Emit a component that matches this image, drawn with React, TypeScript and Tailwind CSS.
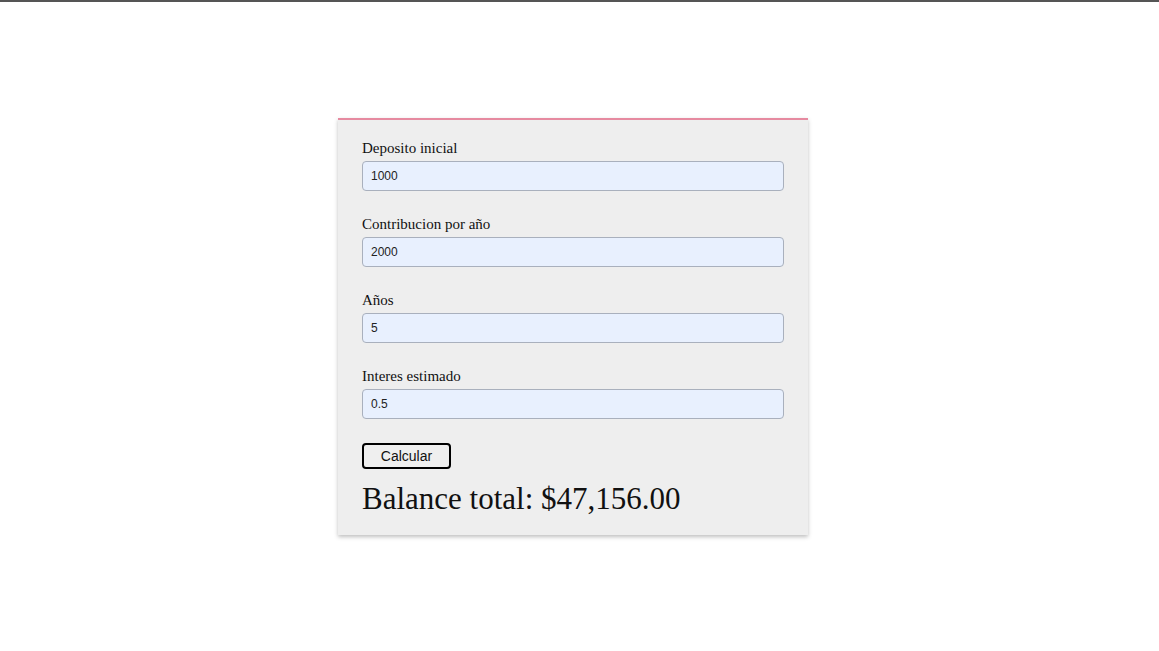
import React from "react";

const fields = [
  { label: "Deposito inicial", value: "1000" },
  { label: "Contribucion por año", value: "2000" },
  { label: "Años", value: "5" },
  { label: "Interes estimado", value: "0.5" },
];

export default function App() {
  return (
    <div className="min-h-[651px] bg-white border-t-2 border-[#555555]">
      <div className="flex justify-center pt-[116px] pr-[13px]">
        <div
          className="w-[470px] bg-[#eeeeee] border-t-2 border-[#e68aa0] shadow-[0_2px_4px_rgba(0,0,0,0.25)] px-6 pt-5 pb-5"
          style={{ fontFamily: '"Liberation Serif", serif' }}
        >
          <div className="flex flex-col gap-[25px]">
            {fields.map((f) => (
              <div key={f.label} className="flex flex-col">
                <label className="text-[15px] leading-4 text-[#111] mb-[5px]">{f.label}</label>
                <input
                  readOnly
                  value={f.value}
                  className="h-[30px] w-full rounded-[4px] border border-[#a9b0bd] bg-[#e8f0fe] px-2 text-[12px] text-[#222] outline-none"
                  style={{ fontFamily: '"Liberation Sans", Arial, sans-serif' }}
                />
              </div>
            ))}
          </div>
          <button
            className="mt-6 h-[26px] w-[89px] rounded-[4px] border-2 border-black bg-[#efefef] text-[14px] text-[#111]"
            style={{ fontFamily: '"Liberation Sans", Arial, sans-serif' }}
          >
            Calcular
          </button>
          <div className="mt-[14px] text-[31px] leading-8 text-[#111]">Balance total: $47,156.00</div>
        </div>
      </div>
    </div>
  );
}
